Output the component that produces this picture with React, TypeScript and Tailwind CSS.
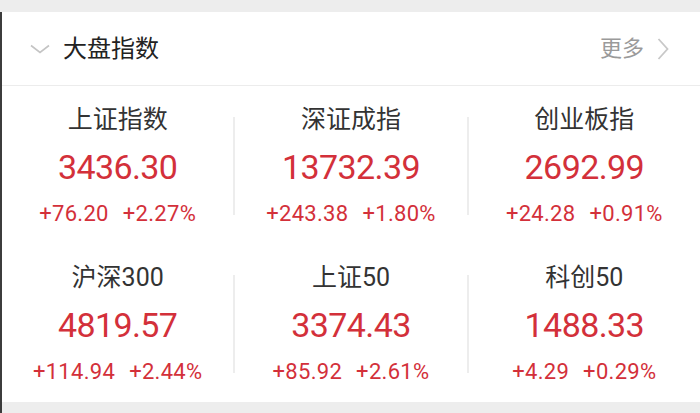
import React from 'react'

type IndexItem = { name: string; price: string; change: string; pct: string }

const ROWS: IndexItem[][] = [
  [
    { name: '上证指数', price: '3436.30', change: '+76.20', pct: '+2.27%' },
    { name: '深证成指', price: '13732.39', change: '+243.38', pct: '+1.80%' },
    { name: '创业板指', price: '2692.99', change: '+24.28', pct: '+0.91%' },
  ],
  [
    { name: '沪深300', price: '4819.57', change: '+114.94', pct: '+2.44%' },
    { name: '上证50', price: '3374.43', change: '+85.92', pct: '+2.61%' },
    { name: '科创50', price: '1488.33', change: '+4.29', pct: '+0.29%' },
  ],
]

const CJK = "font-['Roboto','Noto_Sans_CJK_SC',sans-serif]"

function IndexCell({ item }: { item: IndexItem }) {
  return (
    <div className="flex-1 flex flex-col items-center pt-[19px]">
      <div className={`h-[30px] leading-[30px] text-[25px] text-[#333] ${CJK}`}>{item.name}</div>
      <div className="mt-[12px] h-[40px] leading-[40px] text-[34px] tracking-[-0.6px] text-[#d3303a] font-['Roboto',sans-serif]">
        {item.price}
      </div>
      <div className="mt-[14px] h-[26px] leading-[26px] flex gap-[14px] text-[22px] tracking-[0.3px] text-[#d3303a] font-['Roboto',sans-serif]">
        <span>{item.change}</span>
        <span>{item.pct}</span>
      </div>
    </div>
  )
}

export default function App() {
  return (
    <div className="w-[700px] h-[413px] bg-[#ededed] pt-[12px] overflow-hidden">
      <div className="h-full border-l-[2px] border-[#3c3c3c]">
        <div className="bg-white">
          {/* header */}
          <div className="h-[73px] flex items-center pl-[28px] pr-[31px]">
            <svg width="20" height="10" viewBox="0 0 20 10" className="text-[#c4c4c4]">
              <path d="M1 1.5 L10 8.5 L19 1.5" fill="none" stroke="currentColor" strokeWidth="1.6" />
            </svg>
            <span className={`ml-[13px] text-[24px] text-[#222] ${CJK}`}>大盘指数</span>
            <span className={`ml-auto text-[22px] text-[#9a9a9a] ${CJK}`}>更多</span>
            <svg width="12" height="22" viewBox="0 0 12 22" className="ml-[13px] text-[#c8c8c8]">
              <path d="M1.5 1 L10.5 11 L1.5 21" fill="none" stroke="currentColor" strokeWidth="1.8" />
            </svg>
          </div>
          <div className="h-px bg-[#ececec]" />

          {/* grid */}
          {ROWS.map((row, ri) => (
            <div key={ri} className="h-[158px] flex">
              {row.map((item, i) => (
                <React.Fragment key={item.name}>
                  {i > 0 && <div className="w-[2px] h-[98px] mt-[31px] bg-[#ededed]" />}
                  <IndexCell item={item} />
                </React.Fragment>
              ))}
            </div>
          ))}
        </div>
      </div>
    </div>
  )
}
